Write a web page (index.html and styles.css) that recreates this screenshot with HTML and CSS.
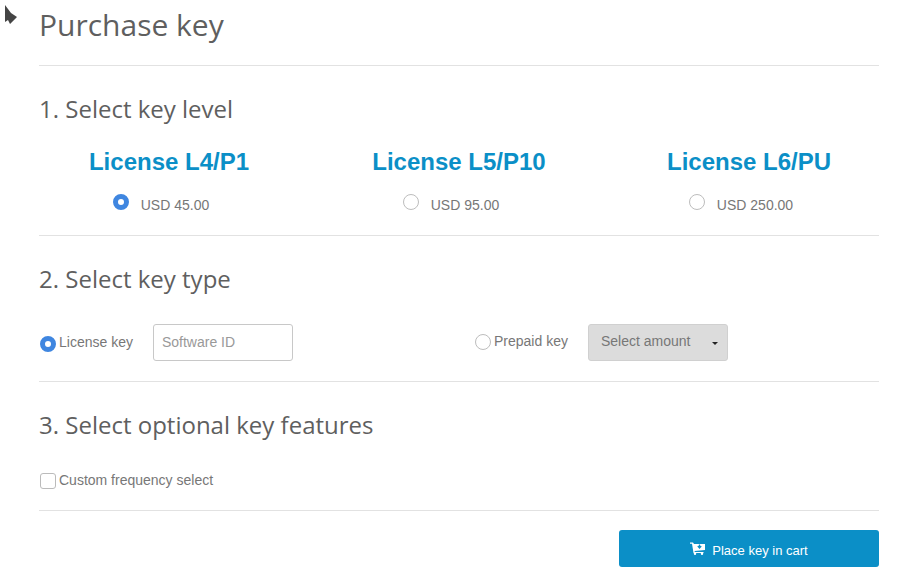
FILE: index.html
```html
<!DOCTYPE html>
<html lang="en">
<head>
<meta charset="utf-8">
<title>Purchase key</title>
<link rel="stylesheet" href="styles.css">
</head>
<body>
<div class="cursor-layer">
  <svg class="cursor" width="14" height="22" viewBox="0 0 14 22"><path d="M1 0 L1 17 L4 15 L6 19 L13 12 L7 8 Z" fill="#444"/></svg>
</div>
<main class="page">
  <h1 class="title">Purchase key</h1>
  <hr class="rule rule-title">
  <h2 class="step step-1">1. Select key level</h2>
  <div class="levels">
    <div class="level level-a">
      <div class="level-name">License L4/P1</div>
      <div class="level-price"><span class="radio checked"></span><span class="price">USD 45.00</span></div>
    </div>
    <div class="level level-b">
      <div class="level-name">License L5/P10</div>
      <div class="level-price"><span class="radio"></span><span class="price">USD 95.00</span></div>
    </div>
    <div class="level level-c">
      <div class="level-name">License L6/PU</div>
      <div class="level-price"><span class="radio"></span><span class="price">USD 250.00</span></div>
    </div>
  </div>
  <hr class="rule rule-levels">
  <h2 class="step step-2">2. Select key type</h2>
  <div class="types">
    <div class="type type-license">
      <span class="radio checked"></span><span class="type-label">License key</span>
      <input class="software" type="text" placeholder="Software ID">
    </div>
    <div class="type type-prepaid">
      <span class="radio"></span><span class="type-label">Prepaid key</span>
      <div class="amount"><span>Select amount</span><span class="caret"></span></div>
    </div>
  </div>
  <hr class="rule rule-types">
  <h2 class="step step-3">3. Select optional key features</h2>
  <div class="feature"><span class="check"></span><span class="type-label">Custom frequency select</span></div>
  <hr class="rule rule-feature">
  <div class="actions">
    <button class="cart" type="button">
      <svg width="15" height="13" viewBox="0 0 15 13"><path d="M0 0.5 H3 L4 2 H15 V8 L4.5 9 L4.8 10 H13.5 V11 H3.5 L2 1.7 H0 Z" fill="#fff"/><circle cx="5" cy="11.8" r="1.2" fill="#fff"/><circle cx="12" cy="11.8" r="1.2" fill="#fff"/><path d="M9.5 2.6 V5 M7.8 4 L9.5 6 L11.2 4" stroke="#0b8fc7" stroke-width="1.2" fill="none"/></svg>
      <span class="cart-label">Place key in cart</span>
    </button>
  </div>
</main>
</body>
</html>
```
FILE: styles.css
```css
* { box-sizing: border-box; }
html, body { margin: 0; padding: 0; background: #fff; }
body { width: 914px; height: 584px; overflow: hidden; font-family: "Liberation Sans", Arial, sans-serif; color: #777; }
.cursor-layer { position: absolute; left: 4px; top: 5px; }
.cursor { display: block; }
.page { padding: 0 35px 0 39px; }
.title { margin: 0; padding-top: 6px; height: 65px; font: 400 30px/38px "Open Sans", sans-serif; color: #5f5f5f; }
.rule { margin: 0; border: 0; border-top: 1px solid #e2e2e2; }
.step { margin: 0; font: 400 24px/30px "Open Sans", sans-serif; color: #5f5f5f; }
.step-1 { padding-top: 28px; height: 72px; }
.levels { display: flex; height: 97px; padding-top: 10px; }
.level { flex: none; display: flex; flex-direction: column; align-items: center; }
.level-a { width: 260px; }
.level-b { width: 320px; }
.level-c { width: 260px; }
.level-name { font: 700 24px/28px "Liberation Sans", sans-serif; color: #0b8fc7; }
.level-price { display: flex; align-items: flex-start; margin-top: 18px; margin-left: -16px; }
.price { font-size: 14px; line-height: 18px; margin-left: 12px; margin-top: 2px; color: #777; }
.radio { display: inline-block; flex: none; width: 16px; height: 16px; border-radius: 50%; border: 1px solid #bdbdbd; background: #fff; }
.radio.checked { border: 5px solid #3f86e0; }
.step-2 { padding-top: 28px; height: 88px; }
.types { display: flex; height: 57px; }
.type { display: flex; align-items: flex-start; }
.type-license { width: 436px; }
.type-prepaid { width: 404px; }
.type-label { font-size: 14px; line-height: 18px; color: #777; }
.type-license .radio { margin: 12px 3px 0 1px; }
.type-license .type-label { margin-top: 9px; }
.type-prepaid .radio { margin: 10px 3px 0 0; }
.type-prepaid .type-label { margin-top: 8px; }
.software { width: 140px; height: 37px; margin-left: 20px; padding: 0 8px 2px; border: 1px solid #c8c8c8; border-radius: 3px; font: 14px "Liberation Sans", sans-serif; color: #777; background: #fff; }
.software::placeholder { color: #999; opacity: 1; }
.amount { display: flex; align-items: center; justify-content: space-between; width: 140px; height: 37px; margin-left: 20px; padding: 0 9px 4px 12px; background: #dcdcdc; border: 1px solid #d0d0d0; border-radius: 3px; font-size: 14px; color: #777; }
.caret { width: 0; height: 0; margin-top: 5px; border-left: 3px solid transparent; border-right: 3px solid transparent; border-top: 3px solid #222; }
.step-3 { padding-top: 28px; height: 81px; }
.feature { display: flex; align-items: flex-start; height: 47px; padding-left: 1px; }
.feature .type-label { margin-top: 8px; }
.check { flex: none; width: 16px; height: 16px; margin-top: 10px; margin-right: 3px; border: 1px solid #bbb; border-radius: 3px; background: #fff; }
.actions { display: flex; justify-content: flex-end; padding-top: 19px; }
.cart { display: flex; align-items: center; justify-content: center; gap: 7px; width: 260px; height: 37px; padding: 0; border: 0; border-radius: 3px; background: #0b8fc7; color: #fff; font: 13px "Liberation Sans", sans-serif; }
.cart-label { padding-top: 3px; }
```
